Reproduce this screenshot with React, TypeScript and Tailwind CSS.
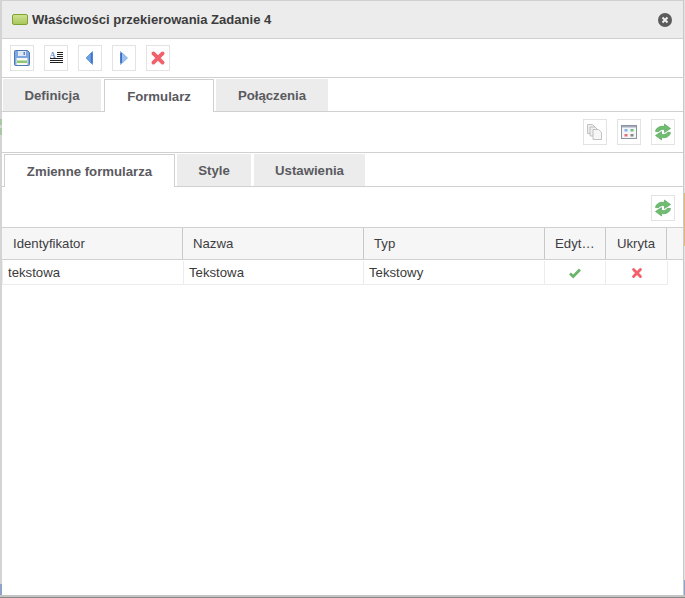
import React from 'react';

const SaveIcon = () => (
  <svg width="16" height="16" viewBox="0 0 16 16">
    <path d="M0.5 1.5a1 1 0 0 1 1-1h12l2 2v12a1 1 0 0 1-1 1h-13a1 1 0 0 1-1-1z" fill="#7fa8e0" stroke="#4f76b4" strokeWidth="1" />
    <rect x="4" y="1" width="8" height="5" fill="#dfe9f6" />
    <rect x="9.5" y="2" width="1.5" height="3" fill="#5c86c4" />
    <rect x="2.5" y="8" width="11" height="7" fill="#f6f8f4" />
    <rect x="3" y="10.5" width="10" height="2.5" fill="#93c56c" />
  </svg>
);

const TextIcon = () => (
  <svg width="13" height="13" viewBox="0 0 13 13">
    <text x="-0.5" y="6.5" fontSize="8.5" fontWeight="700" fill="#6a92cc" fontFamily="'Liberation Serif', serif">A</text>
    <path d="M7 1.5h6M7 3.5h6M7 5.5h6M0 7.5h13M0 9.5h13M0 11.5h13" stroke="#222" strokeWidth="1" />
  </svg>
);

const LeftIcon = () => (
  <svg width="16" height="16" viewBox="0 0 16 16">
    <path d="M4 8L10.5 1.5V14.5z" fill="#6ba3e6" stroke="#4f86cf" strokeWidth="0.7" />
    <rect x="8.8" y="3" width="1.8" height="10" fill="#3f74c8" />
  </svg>
);

const RightIcon = () => (
  <svg width="16" height="16" viewBox="0 0 16 16">
    <path d="M11.5 8L4.5 1.5V14.5z" fill="#98c0ef" stroke="#6b9cdc" strokeWidth="0.7" />
    <rect x="4.2" y="3" width="1.8" height="10" fill="#3f6fc4" />
  </svg>
);

const CrossIcon = ({ size = 16 }: { size?: number }) => (
  <svg width={size} height={size} viewBox="0 0 16 16">
    <path d="M3.4 3.4L12.6 12.6M12.6 3.4L3.4 12.6" stroke="#f2606a" strokeWidth="3.8" strokeLinecap="round" />
  </svg>
);

const CopyIcon = () => (
  <svg width="16" height="16" viewBox="0 0 16 16">
    <path d="M0.5 0.5h5l2 2v7h-7z" fill="#efefef" stroke="#b4b4b4" strokeWidth="0.8" />
    <path d="M3 3h5l2 2v7H3z" fill="#efefef" stroke="#b4b4b4" strokeWidth="0.8" />
    <path d="M6 5.5h5.5l3 3v7H6z" fill="#f6f6f6" stroke="#b4b4b4" strokeWidth="0.8" />
  </svg>
);

const GridIcon = () => (
  <svg width="16" height="14" viewBox="0 0 16 14">
    <rect x="0.5" y="0.5" width="15" height="13" fill="#f4f5f7" stroke="#8b93a3" />
    <rect x="1" y="1" width="14" height="1.5" fill="#a3abba" />
    <rect x="3.5" y="4" width="3" height="2.5" fill="#7fb0e6" />
    <rect x="9.5" y="4" width="3" height="2.5" fill="#6fbf82" />
    <rect x="3.5" y="9" width="3" height="2.5" fill="#e4707a" />
    <rect x="9.5" y="9" width="3" height="2.5" fill="#8a8a8a" />
  </svg>
);

const RefreshIcon = () => (
  <svg width="18" height="18" viewBox="0 0 18 18">
    <path d="M1.5 8.5C2 4.8 6 2.6 10.5 3.4V1L16.5 5.5L10.5 9.5V6.6C8 6 5.5 7 4.5 8.8z" fill="#6fbe6f" stroke="#4f9a55" strokeWidth="0.6" />
    <path d="M16.5 9.5C16 13.2 12 15.4 7.5 14.6V17L1.5 12.5L7.5 8.5V11.4C10 12 12.5 11 13.5 9.2z" fill="#6fbe6f" stroke="#4f9a55" strokeWidth="0.6" />
  </svg>
);

const CheckIcon = () => (
  <svg width="14" height="12" viewBox="0 0 14 12">
    <path d="M2 6.5L5.2 9.5L12 2.5" fill="none" stroke="#6cb56c" strokeWidth="2.8" />
  </svg>
);

const ToolButton = ({ children }: { children: React.ReactNode }) => (
  <div className="flex h-[26px] w-6 items-center justify-center border border-[#e3e3e3] bg-white">
    {children}
  </div>
);

const Tab = ({ label, width, active }: { label: string; width: string; active?: boolean }) => (
  <div
    className={
      active
        ? `${width} relative -mb-px flex h-[33px] items-center justify-center border border-b-0 border-[#d0d0d0] bg-white pt-[2px] text-[13.2px] font-bold text-[#5a5a5f]`
        : `${width} flex h-[32px] items-center justify-center bg-[#ececec] pt-[2px] text-[13.2px] font-bold text-[#5a5a5f]`
    }
  >
    {label}
  </div>
);

const columns = [
  { label: 'Identyfikator', width: 'w-[181px]', pad: 'pl-[11px]' },
  { label: 'Nazwa', width: 'w-[181px]', pad: 'pl-[10px]' },
  { label: 'Typ', width: 'w-[181px]', pad: 'pl-[10px]' },
  { label: 'Edyt…', width: 'w-[61px]', pad: 'pl-[10px]' },
  { label: 'Ukryta', width: 'w-[61px]', pad: 'justify-center' },
];

const App: React.FC = () => {
  return (
    <div className="flex h-[598px] w-[685px] flex-col bg-white font-['Liberation_Sans',Arial,sans-serif]">
      <div className="flex h-[595px]">
        {/* page behind the dialog, left edge */}
        <div className="flex w-[2px] flex-col bg-[#d4d4d4]">
          <div className="h-[119px]" />
          <div className="h-[6px] bg-[#a9c9a4]" />
          <div className="h-[3px]" />
          <div className="h-[7px] bg-[#a9c9a4]" />
          <div className="flex-1" />
          <div className="h-[11px] bg-[#8fa3c9]" />
        </div>

        <div className="flex w-[682px] flex-col border-r border-[#c9c9c9] bg-white">
          {/* title bar */}
          <div className="flex h-[39px] items-center justify-between border-t border-b border-[#d0d0d0] bg-[#ececec] pl-[10px] pr-[11px]">
            <div className="flex items-center gap-[4px]">
              <div className="h-[11px] w-[16px] rounded-[2px] border border-[#7ea32e] bg-gradient-to-b from-[#cfe08f] to-[#a9c85e]" />
              <span className="text-[13.05px] font-bold text-[#3c3c3c]">Właściwości przekierowania Zadanie 4</span>
            </div>
            <svg width="14" height="14" viewBox="0 0 14 14">
              <circle cx="7" cy="7" r="7" fill="#5c5c5c" />
              <path d="M4.5 4.5L9.5 9.5M9.5 4.5L4.5 9.5" stroke="#f0f0f0" strokeWidth="2" />
            </svg>
          </div>

          {/* main toolbar */}
          <div className="flex h-[39px] items-center gap-[10px] border-b border-[#d0d0d0] pb-[1px] pl-2">
            <ToolButton><SaveIcon /></ToolButton>
            <ToolButton><TextIcon /></ToolButton>
            <ToolButton><LeftIcon /></ToolButton>
            <ToolButton><RightIcon /></ToolButton>
            <ToolButton><CrossIcon /></ToolButton>
          </div>

          {/* outer tabs */}
          <div className="flex h-[34px] items-end gap-[2px] border-b border-[#d0d0d0] pl-px">
            <div className="mr-px"><Tab label="Definicja" width="w-[98px]" /></div>
            <Tab label="Formularz" width="w-[110px]" active />
            <Tab label="Połączenia" width="w-[112px]" />
          </div>

          <div className="flex h-[41px] items-center justify-end gap-[10px] border-b border-[#d0d0d0] pr-2">
            <ToolButton><CopyIcon /></ToolButton>
            <ToolButton><GridIcon /></ToolButton>
            <ToolButton><RefreshIcon /></ToolButton>
          </div>

          {/* inner tabs */}
          <div className="flex h-[34px] items-end gap-[2px] border-b border-[#d0d0d0] pl-[2px]">
            <Tab label="Zmienne formularza" width="w-[171px]" active />
            <Tab label="Style" width="w-[74px]" />
            <div className="ml-px"><Tab label="Ustawienia" width="w-[111px]" /></div>
          </div>

          <div className="flex h-[40px] items-start justify-end pr-2 pt-2">
            <ToolButton><RefreshIcon /></ToolButton>
          </div>

          {/* grid header */}
          <div className="flex h-[33px] border-y border-[#d0d0d0] bg-[#f6f6f6]">
            {columns.map((col) => (
              <div
                key={col.label}
                className={`${col.width} ${col.pad} flex items-center border-r border-[#c8c8c8] text-[13.2px] text-[#3d3d42]`}
              >
                {col.label}
              </div>
            ))}
          </div>

          {/* grid row */}
          <div className="flex h-[25px] pt-px">
            <div className="flex w-[182px] items-center border-r border-b border-l border-[#ececec] pl-[5px] text-[13.2px] text-[#3a3a3a]">tekstowa</div>
            <div className="flex w-[180px] items-center border-r border-b border-[#ececec] pl-[5px] text-[13.2px] text-[#3a3a3a]">Tekstowa</div>
            <div className="flex w-[181px] items-center border-r border-b border-[#ececec] pl-[5px] text-[13.2px] text-[#3a3a3a]">Tekstowy</div>
            <div className="flex w-[61px] items-center justify-center border-r border-b border-[#ececec]"><CheckIcon /></div>
            <div className="flex w-[62px] items-center justify-center border-r border-b border-[#ececec]"><CrossIcon size={12} /></div>
          </div>
        </div>

        {/* page behind the dialog, right edge */}
        <div className="flex w-px flex-col bg-[#e4e4e4]">
          <div className="h-[193px]" />
          <div className="h-[53px] bg-[#e3b878]" />
          <div className="flex-1" />
          <div className="h-[15px] bg-[#8fa3c9]" />
        </div>
      </div>

      <div className="h-[2px] bg-[#c4c4c4]" />
      <div className="h-px bg-[#8a8a8a]" />
    </div>
  );
};

export default App;
